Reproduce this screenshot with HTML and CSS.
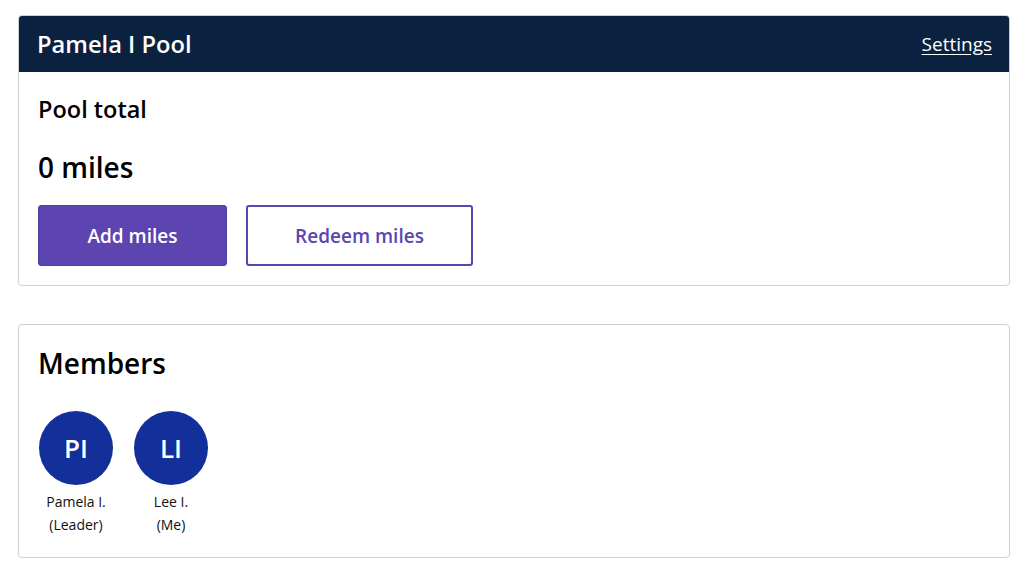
FILE: index.html
```html
<!DOCTYPE html>
<html lang="en">
<head>
<meta charset="utf-8">
<title>Pamela I Pool</title>
<link rel="stylesheet" href="styles.css">
</head>
<body>
<main class="page">
  <section class="card pool">
    <header class="pool-header">
      <h1 class="pool-title">Pamela I Pool</h1>
      <a class="settings" href="#">Settings</a>
    </header>
    <div class="pool-body">
      <h2 class="pool-label">Pool total</h2>
      <p class="pool-amount">0 miles</p>
      <div class="actions">
        <button class="btn btn-primary" type="button">Add miles</button>
        <button class="btn btn-outline" type="button">Redeem miles</button>
      </div>
    </div>
  </section>
  <section class="card members">
    <h2 class="members-title">Members</h2>
    <ul class="member-list">
      <li class="member">
        <span class="avatar">PI</span>
        <span class="member-name">Pamela I.</span>
        <span class="member-role">(Leader)</span>
      </li>
      <li class="member">
        <span class="avatar">LI</span>
        <span class="member-name">Lee I.</span>
        <span class="member-role">(Me)</span>
      </li>
    </ul>
  </section>
</main>
</body>
</html>
```

FILE: styles.css
```css
* { box-sizing: border-box; }
html, body { margin: 0; padding: 0; background: #ffffff; }
body {
  font-family: "Open Sans", "Noto Sans", "Liberation Sans", sans-serif;
  color: #000000;
}
.page {
  display: flex;
  flex-direction: column;
  gap: 38px;
  padding: 15px 14px 0 18px;
}
.card {
  border: 1px solid #d0d0d0;
  border-radius: 4px;
  background: #ffffff;
}
.pool { overflow: hidden; }
.pool-header {
  background: #0a2240;
  height: 57px;
  display: flex;
  align-items: center;
  justify-content: space-between;
  padding: 0 18px 0 19px;
  margin: -1px -1px 0 -1px;
  border-radius: 4px 4px 0 0;
}
.pool-title {
  margin: 0;
  font-size: 23.7px;
  font-weight: 600;
  color: #ffffff;
}
.settings {
  color: #ffffff;
  font-size: 19px;
  text-decoration: underline;
  text-underline-offset: 3px;
}
.pool-body {
  padding: 22px 19px 19px 19px;
}
.pool-label {
  margin: 0;
  font-size: 23.5px;
  font-weight: 600;
  line-height: 30px;
}
.pool-amount {
  margin: 24px 0 0 0;
  font-size: 28px;
  font-weight: 600;
  line-height: 38px;
}
.actions {
  display: flex;
  gap: 19px;
  margin-top: 19px;
}
.btn {
  font-family: inherit;
  font-size: 19px;
  font-weight: 600;
  height: 61px;
  border-radius: 3px;
  cursor: pointer;
}
.btn-primary {
  width: 189px;
  background: #5c45b0;
  border: 1px solid #5040a0;
  color: #ffffff;
}
.btn-outline {
  width: 227px;
  background: #ffffff;
  border: 2px solid #5c45b0;
  color: #5c45b0;
}
.members {
  padding: 19px 19px 21px 19px;
}
.members-title {
  margin: 0;
  font-size: 28px;
  font-weight: 600;
  line-height: 38px;
}
.member-list {
  list-style: none;
  margin: 29px 0 0 0;
  padding: 0 0 0 1px;
  display: flex;
  gap: 21px;
}
.member {
  display: flex;
  flex-direction: column;
  align-items: center;
  width: 74px;
  font-size: 14px;
  line-height: 23px;
  color: #111111;
}
.avatar {
  width: 74px;
  height: 74px;
  border-radius: 50%;
  background: #13309a;
  color: #ffffff;
  display: flex;
  align-items: center;
  justify-content: center;
  font-size: 26px;
  font-weight: 600;
  margin-bottom: 5px;
}
.member-name, .member-role { white-space: nowrap; }
```
